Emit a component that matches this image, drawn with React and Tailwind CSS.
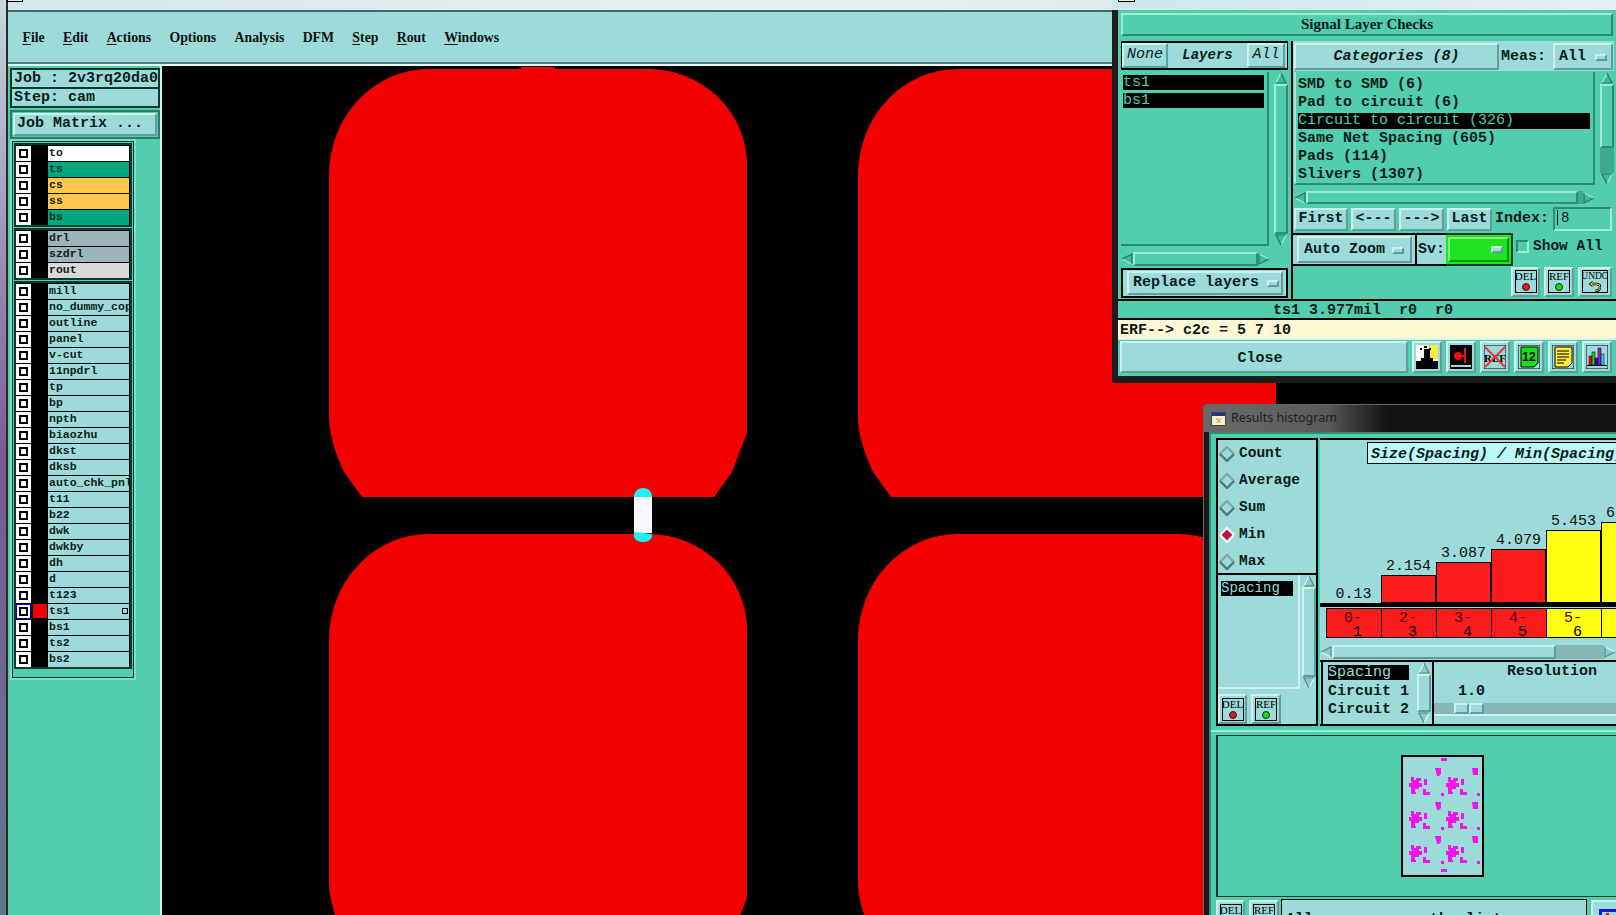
const raisedLight = "border-2 border-t-[#cdf1ef] border-l-[#cdf1ef] border-r-[#5f9c9c] border-b-[#5f9c9c]"
const raisedTeal = "border-2 border-t-[#9fecd6] border-l-[#9fecd6] border-r-[#2c8c74] border-b-[#2c8c74]"
const sunkenTeal = "border-2 border-t-[#2c8c74] border-l-[#2c8c74] border-r-[#9fecd6] border-b-[#9fecd6]"

const topLayers = [
  { name: "to", bg: "bg-white" },
  { name: "ts", bg: "bg-[#00a87c]" },
  { name: "cs", bg: "bg-[#ffc64f]" },
  { name: "ss", bg: "bg-[#ffc64f]" },
  { name: "bs", bg: "bg-[#00a87c]" },
]
const drillLayers = [
  { name: "drl", bg: "bg-[#9eb4bc]" },
  { name: "szdrl", bg: "bg-[#9eb4bc]" },
  { name: "rout", bg: "bg-[#d9d9d9]" },
]
const otherLayers = ["mill", "no_dummy_cop", "outline", "panel", "v-cut", "11npdrl", "tp", "bp", "npth", "biaozhu", "dkst", "dksb", "auto_chk_pnl", "t11", "b22", "dwk", "dwkby", "dh", "d", "t123", "ts1", "bs1", "ts2", "bs2"]
  .map((name) => ({ name, bg: "bg-[#9cdbd9]" }))

const menus = [
  ["", "F", "ile"],
  ["", "E", "dit"],
  ["", "A", "ctions"],
  ["O", "p", "tions"],
  ["Analysis", "", ""],
  ["DFM", "", ""],
  ["", "S", "tep"],
  ["", "R", "out"],
  ["", "W", "indows"],
]

const categories = ["SMD to SMD (6)", "Pad to circuit (6)", "Circuit to circuit (326)", "Same Net Spacing (605)", "Pads (114)", "Slivers (1307)"]

const bars = [
  { value: "0.13", h: 0, a: "0-", b: "1", bg: "bg-[#fb1c1c]" },
  { value: "2.154", h: 28, a: "2-", b: "3", bg: "bg-[#fb1c1c]" },
  { value: "3.087", h: 41, a: "3-", b: "4", bg: "bg-[#fb1c1c]" },
  { value: "4.079", h: 54, a: "4-", b: "5", bg: "bg-[#fb1c1c]" },
  { value: "5.453", h: 73, a: "5-", b: "6", bg: "bg-[#ffff14]" },
  { value: "6.157", h: 81, a: "6-", b: "7", bg: "bg-[#ffff14]" },
]

const padPath = "M329 175 A100 106 0 0 1 429 69 L648 69 A99 96 0 0 1 747 165 L747 433 L732 472 L714 497 L362 497 L344 472 Q329 440 329 417 Z"

function PadCanvas() {
  return (
    <svg viewBox="162 66 1454 849" className="block w-[1454px] h-[849px]">
      <rect x="162" y="66" width="1454" height="849" fill="#000" />
      <path d={padPath} fill="#f40000" />
      <rect x="521" y="67" width="34" height="3" fill="#f40000" />
      <path d={padPath} fill="#f40000" transform="translate(529 0)" />
      <path d={padPath} fill="#f40000" transform="translate(0 465)" />
      <path d={padPath} fill="#f40000" transform="translate(529 465)" />
      <path d="M634 497 L634 495 Q636 488 643 488 Q650 488 652 495 L652 497 Z" fill="#1cf0f4" />
      <rect x="634" y="497" width="18" height="36" fill="#fbf8ff" />
      <path d="M634 532 L652 534 L652 537 Q650 542 643 542 Q636 542 634 537 Z" fill="#1cf0f4" />
    </svg>
  )
}

function LayerRow({ layer }) {
  const active = layer.name === "ts1"
  return (
    <div className="flex h-[16px] items-center bg-black">
      <div className={`w-[15px] h-[15px] flex items-center justify-center ${active ? "bg-[#0000d8]" : "bg-white"}`}>
        <div className="w-[13px] h-[13px] flex items-center justify-center bg-white">
          <div className="w-[9px] h-[9px] border-2 border-black bg-white" />
        </div>
      </div>
      <div className={`w-[14px] h-[14px] ml-[2px] ${active ? "bg-[#f00000]" : "bg-black"}`} />
      <div className={`relative w-[81px] h-[15px] ml-[1px] overflow-hidden pl-[1px] text-[11.5px] leading-[14px] font-bold whitespace-nowrap ${layer.bg} ${layer.name === "ts" || layer.name === "bs" ? "text-[#062f22]" : "text-[#102020]"}`}>
        {layer.name}
        {active && <div className="absolute right-[1px] top-[4px] w-[6px] h-[6px] border border-black" />}
      </div>
    </div>
  )
}

function LayerGroup({ layers }) {
  return (
    <div className="border-2 border-[#0a3a30] bg-black">
      {layers.map((layer) => <LayerRow key={layer.name} layer={layer} />)}
    </div>
  )
}

function Sidebar() {
  return (
    <div className="w-[154px] shrink-0 h-[849px] bg-[#52cdad] border-r-2 border-[#cdf1ef] relative pt-[2px]">
      <div className="ml-[2px] w-[150px] text-[15px] font-bold text-[#0c1c1c]">
        <div className="border-2 border-[#0a3a30] h-[21px] bg-[#9cdbd9] px-[2px] leading-[18px] whitespace-nowrap">Job : 2v3rq20da0</div>
        <div className="border-2 border-t-0 border-[#0a3a30] h-[19px] bg-[#9cdbd9] px-[2px] leading-[18px] whitespace-nowrap overflow-hidden">Step: cam</div>
      </div>
      <div className="ml-[2px] mt-[2px] w-[150px] h-[29px] border-2 border-[#2c7c68] p-[1px]">
        <div className={`${raisedLight} h-full bg-[#9cdbd9] pl-[2px] text-[15px] leading-[18px] font-bold text-[#0c1c1c] whitespace-nowrap`}>Job Matrix ...</div>
      </div>
      <div className="ml-[4px] mt-[2px] w-[122px] h-[537px] border border-[#0a3a30] bg-[#52cdad] outline-2 outline-[#7fdcc4] p-[1px] flex flex-col gap-[1px]">
        <LayerGroup layers={topLayers} />
        <LayerGroup layers={drillLayers} />
        <LayerGroup layers={otherLayers} />
      </div>
    </div>
  )
}

function UpArrow({ dark }) {
  return (
    <svg viewBox="0 0 12 12" className="w-[12px] h-[12px] shrink-0 block">
      <path d="M6 1 L11 11 L1 11 Z" fill={dark ? "#8cc9c7" : "#45b89a"} />
      <path d="M1 11 L6 1" fill="none" stroke={dark ? "#e0f8f6" : "#9fecd6"} strokeWidth="1.2" />
      <path d="M6 1 L11 11 L1 11" fill="none" stroke={dark ? "#4f8c8c" : "#1f7a64"} strokeWidth="1.2" />
    </svg>
  )
}

function VScroll({ className, thumb, dark }) {
  return (
    <div className={`flex flex-col items-center overflow-hidden ${className}`}>
      <UpArrow dark={dark} />
      <div className={`flex-1 w-full min-h-0 ${dark ? "bg-[#86b6b6]" : "bg-[#3fa88c]"}`}>
        <div className={`${dark ? raisedLight + " bg-[#9cdbd9]" : raisedTeal + " bg-[#52cdad]"} w-full`} style={{ height: thumb }} />
      </div>
      <div className="rotate-180 shrink-0"><UpArrow dark={dark} /></div>
    </div>
  )
}

function HScroll({ className, thumb, dark }) {
  return (
    <div className={`flex items-center overflow-hidden ${className}`}>
      <div className="-rotate-90 shrink-0"><UpArrow dark={dark} /></div>
      <div className={`flex-1 h-full min-w-0 ${dark ? "bg-[#86b6b6]" : "bg-[#3fa88c]"}`}>
        <div className={`${dark ? raisedLight + " bg-[#9cdbd9]" : raisedTeal + " bg-[#52cdad]"} h-full`} style={{ width: thumb }} />
      </div>
      <div className="rotate-90 shrink-0"><UpArrow dark={dark} /></div>
    </div>
  )
}

function DropMark() {
  return <div className={`${raisedLight} w-[12px] h-[7px] shrink-0 bg-[#9cdbd9] border`} />
}

function TealButton({ className, children }) {
  return <div className={`${raisedLight} bg-[#9cdbd9] flex items-center justify-center font-bold text-[15px] text-[#0c1c1c] whitespace-nowrap ${className}`}>{children}</div>
}

function DotIcon({ label, color, className }) {
  return (
    <div className={`${raisedLight} bg-[#9cdbd9] flex items-center justify-center ${className}`}>
      <div className="w-[22px] h-[23px] border border-black flex flex-col items-center overflow-hidden">
        <div className="font-['Liberation_Serif',serif] font-normal text-[11px] leading-[11px] text-black">{label}</div>
        <div className="w-[8px] h-[8px] mt-[1px] rounded-full border border-[#222]" style={{ backgroundColor: color }} />
      </div>
    </div>
  )
}

function UndoIcon() {
  return (
    <div className={`${raisedLight} bg-[#9cdbd9] w-[34px] h-[30px] flex items-center justify-center`}>
      <div className="w-[26px] h-[23px] border border-black flex flex-col items-center overflow-hidden">
        <div className="font-['Liberation_Serif',serif] font-normal text-[9.5px] leading-[10px] text-black">UNDO</div>
        <svg viewBox="0 0 12 11" className="w-[12px] h-[11px]">
          <path d="M2 3 H8 Q11 3 11 6 Q11 10 6 10 M4 1 L1.5 3 L4 5" fill="none" stroke="#000" strokeWidth="2.4" />
          <path d="M2 3 H8 Q11 3 11 6 Q11 10 6 10 M4 1 L1.5 3 L4 5" fill="none" stroke="#ffe93c" strokeWidth="1" />
        </svg>
      </div>
    </div>
  )
}

function BottomIcon({ children }) {
  return (
    <div className={`${raisedLight} bg-[#9cdbd9] w-[30px] h-[32px] flex items-center justify-center`}>
      <svg viewBox="0 0 22 24" className="w-[22px] h-[24px] block">{children}</svg>
    </div>
  )
}

function SignalWindow() {
  return (
    <div className="absolute left-[1112px] top-0 w-[504px] h-[383px] bg-[#1c1c1c] pl-[6px] pb-[7px] flex flex-col rounded-bl-[3px]">
      <div className="h-[10px] shrink-0 -ml-[6px] bg-gradient-to-r from-[#cfe6ef] to-[#e3eff4] relative">
        <div className="absolute left-[6px] -top-[8px] w-[17px] h-[10px] border border-black bg-[#eee]" />
      </div>
      <div className="flex-1 bg-[#52cdad] flex flex-col text-[#0c1c1c] font-bold">
        <div className={`${raisedTeal} mx-[3px] mt-[3px] h-[23px] shrink-0 bg-[#52cdad] flex items-center justify-center font-['Liberation_Serif',serif] text-[15px]`}>Signal Layer Checks</div>
        <div className="flex mt-[5px] h-[258px] shrink-0 pl-[3px]">
          <div className="w-[167px] flex flex-col">
            <div className="h-[29px] border-y-2 border-x border-black bg-[#9cdbd9] flex text-[14px] italic items-center">
              <TealButton className="w-[46px] h-[25px] font-normal text-[14px]">None</TealButton>
              <div className="w-[79px] text-center">Layers</div>
              <TealButton className="w-[38px] h-[25px] font-normal text-[14px]">All</TealButton>
            </div>
            <div className="flex mt-[2px] h-[174px]">
              <div className={`${raisedTeal} w-[149px] pt-[1px] pl-[2px] pr-[3px] text-[15px] leading-[15px] border-t-0 border-l-0`}>
                <div className="h-[15px] bg-black text-[#52cdad] mt-[2px] font-normal">ts1</div>
                <div className="h-[15px] bg-black text-[#52cdad] mt-[3px] font-normal">bs1</div>
              </div>
              <VScroll className="w-[14px] ml-[5px]" thumb="100%" />
            </div>
            <HScroll className="w-[149px] h-[14px] mt-[6px]" thumb="100%" />
            <div className="h-[30px] mt-[2px] border-2 border-black bg-[#9cdbd9] pl-[4px] py-[1px]">
              <div className={`${raisedLight} w-[156px] h-full flex items-center pl-[4px] pt-[1px] text-[15px] whitespace-nowrap`}>
                Replace layers<span className="ml-[8px]"><DropMark /></span>
              </div>
            </div>
          </div>
          <div className="w-[323px] ml-[3px] flex flex-col border-l-2 border-black">
            <div className="h-[30px] bg-[#9cdbd9] flex items-center pl-[1px] text-[15px]">
              <TealButton className="w-[205px] h-[27px] italic pt-[2px]">Categories (8)</TealButton>
              <div className="w-[54px] pl-[2px] pt-[2px]">Meas:</div>
              <div className={`${raisedLight} w-[60px] h-[27px] flex items-center pl-[4px] pt-[2px]`}>All<span className="ml-[9px]"><DropMark /></span></div>
            </div>
            <div className="flex mt-[1px] h-[113px] pl-[1px]">
              <div className={`${raisedTeal} w-[301px] border-t-0 border-l-[#2c8c74] pl-[2px] pr-[3px] pt-[4px] text-[15px] leading-[18px] whitespace-nowrap overflow-hidden`}>
                {categories.map((item) => (
                  <div key={item} className={item.startsWith("Circuit") ? "bg-black text-[#52cdad] h-[16px] leading-[16px] my-[1px] font-normal" : "h-[18px]"}>{item}</div>
                ))}
              </div>
              <VScroll className="w-[14px] ml-[5px]" thumb={64} />
            </div>
            <HScroll className="ml-[1px] w-[301px] h-[13px] mt-[6px]" thumb={272} />
            <div className="flex items-center mt-[3px] h-[24px] pl-[1px] text-[15px] whitespace-nowrap">
              <TealButton className="w-[54px] h-[23px] pt-[1px]">First</TealButton>
              <TealButton className="w-[45px] h-[23px] ml-[3px] pt-[1px]">&lt;---</TealButton>
              <TealButton className="w-[45px] h-[23px] ml-[3px] pt-[1px]">---&gt;</TealButton>
              <TealButton className="w-[45px] h-[23px] ml-[3px] pt-[1px]">Last</TealButton>
              <div className="ml-[3px] w-[58px] pt-[1px]">Index:</div>
              <div className={`${sunkenTeal} w-[59px] h-[24px] pl-[6px] text-[14px] leading-[18px] font-normal relative`}>
                <div className="absolute left-[2px] top-[1px] w-[1px] h-[15px] bg-black" />
                8
              </div>
            </div>
            <div className="flex h-[33px] mt-[2px] text-[15px] whitespace-nowrap">
              <div className="w-[124px] bg-[#9cdbd9] border-2 border-black border-l-0 flex items-center pl-[4px]">
                <div className={`${raisedLight} w-[115px] h-[27px] flex items-center pl-[5px] pt-[1px]`}>Auto Zoom<span className="ml-[7px]"><DropMark /></span></div>
              </div>
              <div className="w-[29px] bg-[#9cdbd9] border-y-2 border-black flex items-center pl-[1px] pt-[1px]">Sv:</div>
              <div className="w-[67px] bg-[#1fe31f] border-2 border-l-0 border-[#0a3a30] flex items-center p-[2px]">
                <div className="w-full h-full border-2 border-t-[#7ff07f] border-l-[#7ff07f] border-r-[#109010] border-b-[#109010] flex items-center justify-end pr-[4px]"><DropMark /></div>
              </div>
              <div className={`${sunkenTeal} w-[13px] h-[13px] ml-[3px] mt-[7px]`} />
              <div className="ml-[4px] mt-[3px] text-[14.5px]">Show All</div>
            </div>
            <div className="flex justify-end items-center gap-[4px] h-[32px] pr-[2px] pb-[1px]">
              <DotIcon label="DEL" color="#f01010" className="w-[29px] h-[30px]" />
              <DotIcon label="REF" color="#18d818" className="w-[30px] h-[30px]" />
              <UndoIcon />
            </div>
          </div>
        </div>
        <div className="h-[21px] shrink-0 border-y-2 border-black bg-[#52cdad] flex items-center justify-center text-[15px] whitespace-pre pr-[8px] pt-[3px]">ts1 3.977mil  r0  r0</div>
        <div className="h-[20px] shrink-0 bg-[#fff8d4] pl-[2px] pt-[2px] text-[15px] leading-[17px] border-b border-[#cdf1ef]">ERF--&gt; c2c = 5 7 10</div>
        <div className="flex items-center h-[34px] shrink-0 pl-[2px] pr-[2px] gap-[4px]">
          <TealButton className="w-[288px] h-[32px] text-[15px] pr-[8px] pt-[4px]">Close</TealButton>
          <BottomIcon>
            <rect width="22" height="24" fill="#fff" />
            <rect x="11" width="11" height="14" fill="#ffe93c" />
            <path d="M8 4 h6 v9 h3 v3 h5 v8 H0 v-8 h5 v-3 h3 Z" fill="#000" />
            <rect x="13" y="3" width="2" height="2" fill="#000" />
            <rect x="4" y="3" width="2" height="2" fill="#000" />
            <rect x="8" y="1" width="3" height="2" fill="#000" />
          </BottomIcon>
          <BottomIcon>
            <rect width="22" height="24" fill="#000" />
            <rect x="1" y="20" width="20" height="2" fill="#9cdbd9" />
            <circle cx="8" cy="11" r="4" fill="#f01010" />
            <rect x="8" y="10" width="7" height="2" fill="#f01010" />
            <rect x="14" y="3" width="2" height="15" fill="#f01010" />
          </BottomIcon>
          <BottomIcon>
            <rect width="22" height="24" fill="#9cdbd9" stroke="#000" />
            <text x="11" y="17" textAnchor="middle" fontSize="11" fontFamily="Liberation Serif" fill="#000">REF</text>
            <path d="M1 2 L21 22 M21 2 L1 22" stroke="#e23a3a" strokeWidth="2" />
          </BottomIcon>
          <BottomIcon>
            <rect width="22" height="24" fill="#9cdbd9" stroke="#000" />
            <path d="M3 2 H20 V18 L16 22 H3 Z" fill="#18e018" stroke="#000" />
            <text x="11" y="16" textAnchor="middle" fontSize="12" fontWeight="bold" fontFamily="Liberation Sans" fill="#000">12</text>
          </BottomIcon>
          <BottomIcon>
            <rect width="22" height="24" fill="#9cdbd9" stroke="#000" />
            <path d="M3 2 H20 V18 L16 22 H3 Z" fill="#ffe93c" stroke="#000" />
            <path d="M5 6 H17 M5 9 H17 M5 12 H17 M5 15 H14 M5 18 H12" stroke="#000" />
          </BottomIcon>
          <BottomIcon>
            <rect width="22" height="24" fill="#9cdbd9" stroke="#000" />
            <rect x="3" y="11" width="3" height="9" fill="#e81010" stroke="#000" strokeWidth=".5" />
            <rect x="6" y="7" width="3" height="13" fill="#18c818" stroke="#000" strokeWidth=".5" />
            <rect x="9" y="13" width="3" height="7" fill="#1010e8" stroke="#000" strokeWidth=".5" />
            <rect x="12" y="3" width="3" height="17" fill="#b010c8" stroke="#000" strokeWidth=".5" />
            <rect x="15" y="9" width="3" height="11" fill="#28c8e8" stroke="#000" strokeWidth=".5" />
            <rect x="1" y="20" width="20" height="1" fill="#000" />
          </BottomIcon>
        </div>
      </div>
    </div>
  )
}

function Radio({ label, selected }) {
  return (
    <div className="flex items-center h-[27px] pl-[1px] text-[14.5px]">
      <svg viewBox="0 0 16 16" className="w-[16px] h-[16px] shrink-0">
        <path d="M8 1 L15 8 L8 15 L1 8 Z" fill={selected ? "#c2144c" : "#9cdbd9"} />
        <path d="M1 8 L8 1 L15 8" fill="none" stroke={selected ? "#e8f8f8" : "#7fa8a8"} strokeWidth="2.4" />
        <path d="M1 8 L8 15 L15 8" fill="none" stroke={selected ? "#e8f8f8" : "#4a7a7a"} strokeWidth="2.4" />
      </svg>
      <span className="ml-[4px]">{label}</span>
    </div>
  )
}

function ThumbCluster({ x, y }) {
  const parts = [
    [2, 0, 3, 5], [7, 1, 5, 3], [0, 6, 13, 4], [3, 3, 7, 9], [2, 9, 4, 3], [15, 2, 3, 6],
    [2, 12, 4, 5], [4, 15, 3, 2], [14, 12, 3, 5], [14, 15, 7, 3],
  ]
  return parts.map((p, i) => <rect key={i} x={x + p[0]} y={y + p[1]} width={p[2]} height={p[3]} />)
}

function Thumbnail() {
  const rows = [0, 34, 68]
  return (
    <svg viewBox="0 0 83 122" className="w-[83px] h-[122px] block">
      <rect x="1" y="1" width="81" height="120" fill="#9cdbd9" stroke="#000" strokeWidth="2" />
      <g fill="#f414e8">
        <rect x="40" y="3" width="6" height="3" />
        <rect x="40" y="114" width="6" height="3" />
        {rows.map((r) => (
          <g key={r}>
            <path d={`M34 ${13 + r} H40 V${19 + r} L38 ${21 + r} H36 Z`} />
            <path d={`M71 ${13 + r} H77 V${20 + r} H72 Z`} />
            <ThumbCluster x={8} y={22 + r} />
            <ThumbCluster x={45} y={22 + r} />
            <rect x="40" y={38 + r} width="3" height="3" />
            <rect x="76" y={38 + r} width="3" height="3" />
          </g>
        ))}
      </g>
    </svg>
  )
}

function HistogramWindow() {
  return (
    <div className="absolute left-[1203px] top-[404px] w-[413px] h-[511px] bg-[#1c1818] pl-[5px] flex flex-col rounded-tl-[4px] border-t border-l border-[#666] text-[#0c1c1c] font-bold overflow-hidden">
      <div className="h-[27px] shrink-0 -ml-[5px] flex items-center pl-[7px] bg-gradient-to-r from-[#6a6a6a] via-[#5a5a5a] via-30% to-[#111] to-45% font-['Noto_Sans',sans-serif] font-normal text-[12.5px] text-[#1e1e1e]">
        <div className="w-[15px] h-[14px] border border-[#444] bg-[#f4f0d8] flex flex-col">
          <div className="h-[3px] bg-[#223388]" />
          <div className="flex-1 flex items-center justify-center text-[9px] leading-[9px] text-[#c8a800]">✕</div>
        </div>
        <span className="ml-[5px]">Results histogram</span>
      </div>
      <div className="flex-1 bg-[#52cdad] border-l-2 border-t-2 border-[#2c8c74] pl-[5px] pt-[4px] flex flex-col min-h-0">
        <div className="flex h-[288px] shrink-0">
          <div className="w-[102px] border-2 border-black bg-[#9cdbd9] flex flex-col">
            <div className="h-[135px] border-b-2 border-black">
              <Radio label="Count" />
              <Radio label="Average" />
              <Radio label="Sum" />
              <Radio label="Min" selected />
              <Radio label="Max" />
            </div>
            <div className="flex h-[114px]">
              <div className="w-[82px] border-r-2 border-b-2 border-[#cdf1ef] pt-[6px] pl-[3px] text-[14px] leading-[15px]">
                <div className="w-[72px] h-[15px] bg-black text-[#9cdbd9] font-normal">Spacing</div>
              </div>
              <VScroll className="w-[14px] ml-[2px]" thumb="100%" dark />
            </div>
            <div className="flex items-end gap-[4px] h-[35px]">
              <DotIcon label="DEL" color="#f01010" className="w-[29px] h-[30px]" />
              <DotIcon label="REF" color="#18d818" className="w-[30px] h-[30px]" />
            </div>
          </div>
          <div className="ml-[2px] w-[300px] bg-[#9cdbd9] border-t-2 border-black flex flex-col">
            <div className="h-[167px] relative overflow-hidden border-b-4 border-black shrink-0">
              <div className="absolute left-[47px] top-[2px] w-[260px] h-[22px] bg-[#baf8f8] border border-black pl-[3px] italic text-[15px] leading-[23px] whitespace-nowrap overflow-hidden">Size(Spacing) / Min(Spacing)</div>
              <div className="absolute left-[6px] bottom-0 flex items-end">
                {bars.map((bar) => (
                  <div key={bar.value} className="w-[55px] flex flex-col items-center">
                    <div className="text-[15px] leading-[17px] font-normal whitespace-nowrap text-[#101010]">{bar.value}</div>
                    {bar.h > 0 && <div className={`w-[55px] border border-black ${bar.bg}`} style={{ height: bar.h }} />}
                  </div>
                ))}
              </div>
            </div>
            <div className="overflow-hidden h-[30px] ml-[6px] mt-[1px] border border-black border-r-0 flex w-[330px] shrink-0">
              {bars.map((bar) => (
                <div key={bar.a} className={`w-[55px] shrink-0 border-r border-black text-[15px] leading-[14px] font-normal ${bar.bg} text-[#4a0000] pt-[3px] pl-[17px]`}>
                  <div>{bar.a}</div>
                  <div className="pl-[9px] text-black">{bar.b}</div>
                </div>
              ))}
            </div>
            <HScroll className="w-[296px] h-[14px] mt-[7px] shrink-0" thumb={224} dark />
            <div className="flex flex-1 min-h-0 mt-[1px] border-t-2 border-b-2 border-black">
              <div className="w-[95px] ml-[1px] border-l-2 border-black pl-[5px] pt-[3px] text-[15px] leading-[18px] whitespace-nowrap">
                <div className="bg-black text-[#9cdbd9] w-[81px] h-[15px] leading-[15px] font-normal mb-[3px]">Spacing</div>
                <div>Circuit 1</div>
                <div>Circuit 2</div>
              </div>
              <VScroll className="w-[14px] ml-[1px]" thumb="100%" dark />
              <div className="flex-1 ml-[1px] border-l-2 border-black relative text-[15px] whitespace-nowrap">
                <div className="pl-[73px] leading-[20px]">Resolution</div>
                <div className="pl-[24px] leading-[18px] mt-[1px]">1.0</div>
                <div className="h-[13px] bg-[#86b6b6] border-b-2 border-[#cdf1ef] mt-[2px] pl-[20px] flex">
                  <div className={`${raisedLight} w-[15px] h-[11px] bg-[#9cdbd9] border`} />
                  <div className={`${raisedLight} w-[15px] h-[11px] bg-[#9cdbd9] border`} />
                </div>
              </div>
            </div>
          </div>
        </div>
        <div className="h-[2px] mt-[4px] bg-[#9fecd6] -ml-[5px] shrink-0" />
        <div className="h-[162px] mt-[3px] shrink-0 border-l-2 border-t border-b border-[#0a3a30] bg-[#52cdad] pl-[183px] pt-[19px]">
          <Thumbnail />
        </div>
        <div className="flex mt-[3px] gap-[4px] flex-1 min-h-0">
          <DotIcon label="DEL" color="#f01010" className="w-[29px] h-[30px] shrink-0" />
          <DotIcon label="REF" color="#18d818" className="w-[30px] h-[30px] shrink-0" />
          <div className="w-[306px] h-[30px] shrink-0 -ml-[2px] -mt-[1px] border border-black bg-[#9cdbd9] pl-[4px] pt-[11px] text-[15px] leading-[18px] whitespace-nowrap">All measures on the list</div>
          <div className={`${raisedLight} w-[30px] h-[30px] shrink-0 bg-[#9cdbd9] pl-[6px] pt-[7px]`}>
            <div className="w-[22px] h-[22px] border-[3px] border-[#1818d8]"><div className="w-[3px] h-[5px] ml-[4px] mt-[1px] bg-[#e01010]" /></div>
          </div>
        </div>
      </div>
    </div>
  )
}

export default function App() {
  return (
    <div className="relative w-[1616px] h-[915px] overflow-hidden flex bg-[#e0ecf2] font-['Liberation_Mono',monospace]">
      <div className="w-[6px] shrink-0 bg-gradient-to-b from-[#c8d8e0] via-[#7a5a90] to-[#5e7688]" />
      <div className="w-[2px] shrink-0 bg-[#2a2a2a]" />
      <div className="flex-1 flex flex-col min-w-0">
        <div className="h-[10px] shrink-0 bg-gradient-to-r from-[#d4e6ee] via-[#e8f0f4] to-[#cfe0e8] relative">
          <div className="absolute left-[-1px] -top-[8px] w-[16px] h-[10px] border border-black bg-[#eee]" />
        </div>
        <div className="h-[54px] shrink-0 bg-[#9cdbd9] border-t-2 border-t-[#3b6a6a] border-b-2 border-b-[#4f7f7f] flex items-center gap-[18.3px] pl-[14.5px] pt-[2px] font-['Liberation_Serif',serif] font-bold text-[13.8px] text-[#111] whitespace-nowrap">
          {menus.map((m) => (
            <div key={m[0] + m[1]}>{m[0]}<span className="underline underline-offset-2">{m[1]}</span>{m[2]}</div>
          ))}
        </div>
        <div className="h-[2px] shrink-0 bg-[#e8f8f8]" />
        <div className="flex flex-1 min-h-0">
          <Sidebar />
          <PadCanvas />
        </div>
      </div>
      <SignalWindow />
      <HistogramWindow />
    </div>
  )
}
